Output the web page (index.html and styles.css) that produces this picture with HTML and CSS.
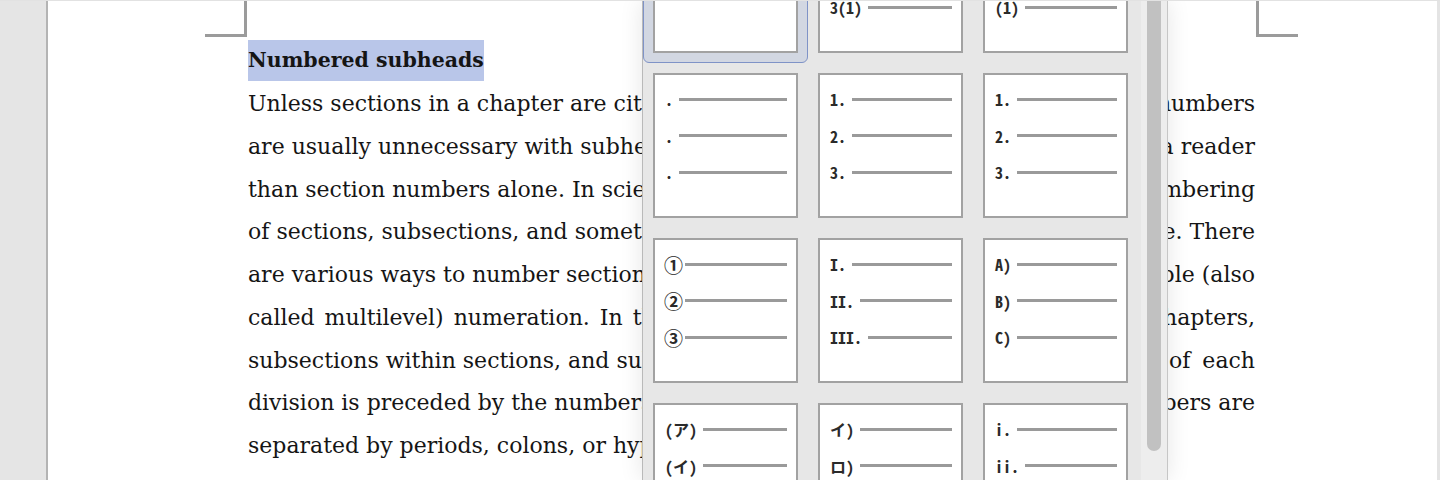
FILE: index.html
```html
<!DOCTYPE html>
<html lang="en">
<head>
  <meta charset="UTF-8">
  <title>Numbered subheads</title>
  <link rel="stylesheet" href="styles.css">
</head>
<body>
  <div class="screen">
    <div class="gutter"></div>
    <div class="page">
      <div class="doc">
        <div class="marks">
          <span class="mark mark-l"></span>
          <span class="mark mark-r"></span>
        </div>
        <h2 class="subhead"><span>Numbered subheads</span></h2>
        <div class="body-text">
          <div class="ln"><span>Unless sections in a chapter are cited in</span><span>section numbers</span></div>
          <div class="ln"><span>are usually unnecessary with subheads, since</span><span>tells a reader</span></div>
          <div class="ln"><span>than section numbers alone. In scientific works,</span><span>the numbering</span></div>
          <div class="ln"><span>of sections, subsections, and sometimes even</span><span>advisable. There</span></div>
          <div class="ln"><span>are various ways to number sections; most</span><span>multiple (also</span></div>
          <div class="ln wide"><span>called multilevel) numeration. In this system,</span><span>within chapters,</span></div>
          <div class="ln wider"><span>subsections within sections, and sub-subsections</span><span>number of each</span></div>
          <div class="ln"><span>division is preceded by the numbers of the</span><span>all numbers are</span></div>
          <div class="ln"><span>separated by periods, colons, or hyphens.</span></div>
        </div>
      </div>

      <!-- numbering gallery dropdown -->
      <div class="gallery">
        <div class="gallery-scroll">
          <div class="tiles">
            <div class="sel"><div class="tile"></div></div>
            <div class="tile">
              <div class="row"><span class="lbl">1(1)</span><i class="rule"></i></div>
              <div class="row"><span class="lbl">2(1)</span><i class="rule"></i></div>
              <div class="row"><span class="lbl">3(1)</span><i class="rule"></i></div>
            </div>
            <div class="tile">
              <div class="row"><span class="lbl">1</span><i class="rule"></i></div>
              <div class="row"><span class="lbl">1.1</span><i class="rule"></i></div>
              <div class="row"><span class="lbl">(1)</span><i class="rule"></i></div>
            </div>

            <div class="tile">
              <div class="row"><span class="lbl">.</span><i class="rule"></i></div>
              <div class="row"><span class="lbl">.</span><i class="rule"></i></div>
              <div class="row"><span class="lbl">.</span><i class="rule"></i></div>
            </div>
            <div class="tile">
              <div class="row"><span class="lbl">1.</span><i class="rule"></i></div>
              <div class="row"><span class="lbl">2.</span><i class="rule"></i></div>
              <div class="row"><span class="lbl">3.</span><i class="rule"></i></div>
            </div>
            <div class="tile">
              <div class="row"><span class="lbl">1.</span><i class="rule"></i></div>
              <div class="row"><span class="lbl">2.</span><i class="rule"></i></div>
              <div class="row"><span class="lbl">3.</span><i class="rule"></i></div>
            </div>

            <div class="tile circled">
              <div class="row"><span class="lbl">①</span><i class="rule"></i></div>
              <div class="row"><span class="lbl">②</span><i class="rule"></i></div>
              <div class="row"><span class="lbl">③</span><i class="rule"></i></div>
            </div>
            <div class="tile">
              <div class="row"><span class="lbl">I.</span><i class="rule"></i></div>
              <div class="row"><span class="lbl">II.</span><i class="rule"></i></div>
              <div class="row"><span class="lbl">III.</span><i class="rule"></i></div>
            </div>
            <div class="tile">
              <div class="row"><span class="lbl">A)</span><i class="rule"></i></div>
              <div class="row"><span class="lbl">B)</span><i class="rule"></i></div>
              <div class="row"><span class="lbl">C)</span><i class="rule"></i></div>
            </div>

            <div class="tile">
              <div class="row"><span class="lbl">(ア)</span><i class="rule"></i></div>
              <div class="row"><span class="lbl">(イ)</span><i class="rule"></i></div>
              <div class="row"><span class="lbl">(ウ)</span><i class="rule"></i></div>
            </div>
            <div class="tile">
              <div class="row"><span class="lbl">イ)</span><i class="rule"></i></div>
              <div class="row"><span class="lbl">ロ)</span><i class="rule"></i></div>
              <div class="row"><span class="lbl">ハ)</span><i class="rule"></i></div>
            </div>
            <div class="tile">
              <div class="row"><span class="lbl">i.</span><i class="rule"></i></div>
              <div class="row"><span class="lbl">ii.</span><i class="rule"></i></div>
              <div class="row"><span class="lbl">iii.</span><i class="rule"></i></div>
            </div>
          </div>
        </div>
        <div class="scrollbar"><div class="thumb"></div></div>
      </div>
    </div>
  </div>
</body>
</html>
```

FILE: styles.css
```css
html, body {
  margin: 0;
  padding: 0;
  height: 480px;
  overflow: hidden;
  background: #e6e6e6;
}
.screen {
  display: flex;
  height: 479px;
  border-top: 1px solid #e2e2e2;
}
.gutter {
  width: 46px;
  background: #e5e5e5;
  border-right: 2px solid #b4b4b4;
}
.page {
  position: relative;
  flex: 1;
  background: #fff;
  border-right: 3px solid #e4e4e4;
  overflow: hidden;
}
.doc {
  padding-left: 200px;
  width: 1007px;
  color: #151515;
  font-family: "DejaVu Serif", "Liberation Serif", serif;
}
.marks {
  display: flex;
  justify-content: space-between;
  margin-left: -43px;
  width: 1093px;
  margin-top: -1px;
}
.mark {
  display: block;
  width: 39px;
  height: 34px;
  border-bottom: 3px solid #9b9b9b;
}
.mark-l {
  border-right: 3px solid #9b9b9b;
}
.mark-r {
  border-left: 3px solid #9b9b9b;
}
.subhead {
  margin: 3px 0 0 0;
  font-size: 20.5px;
  font-weight: bold;
  line-height: 41px;
}
.subhead span {
  display: inline-block;
  background: #b9c6e9;
}
.body-text {
  margin-top: 2px;
  font-size: 22px;
  line-height: 42.75px;
}
.ln {
  display: flex;
  justify-content: space-between;
  white-space: nowrap;
}
.ln.wide span:first-child {
  word-spacing: 3px;
}
.ln.wider span:last-child {
  word-spacing: 5px;
}

/* dropdown gallery */
.gallery {
  position: absolute;
  top: 0;
  bottom: 0;
  left: 594px;
  width: 524px;
  display: flex;
  background: #e7e7e7;
  border-left: 1px solid #b9b9b9;
  border-right: 1px solid #c6c6c6;
  box-shadow: 0 0 22px rgba(0,0,0,0.10);
}
.gallery-scroll {
  flex: 1;
  overflow: hidden;
}
.tiles {
  display: grid;
  grid-template-columns: repeat(3, 145px);
  grid-auto-rows: 145px;
  gap: 20px;
  padding-left: 10px;
  margin-top: -93px;
}
.sel {
  margin: -10px;
  padding: 9px;
  border: 1px solid #7f93c7;
  border-radius: 6px;
  background: #d2d7e2;
}
.tile {
  box-sizing: border-box;
  height: 145px;
  background: #fff;
  border: 2px solid #a2a2a2;
  padding: 6px 9px 0 10px;
}
.row {
  display: flex;
  align-items: center;
  height: 36.5px;
}
.lbl {
  font-family: "Noto Sans Mono CJK JP", "Noto Sans CJK JP", monospace;
  font-size: 16px;
  font-weight: bold;
  color: #2a2a2a;
  line-height: 1;
}
.circled .lbl {
  font-size: 19px;
  margin-left: -1px;
}
.circled .rule {
  margin-left: 2px;
}
.rule {
  flex: 1;
  height: 3px;
  margin-left: 6px;
  background: #9a9a9a;
}
.scrollbar {
  width: 26px;
  background: #ededed;
}
.thumb {
  margin: -10px 6px 0 6px;
  height: 460px;
  border-radius: 8px;
  background: #c1c1c1;
}
```
